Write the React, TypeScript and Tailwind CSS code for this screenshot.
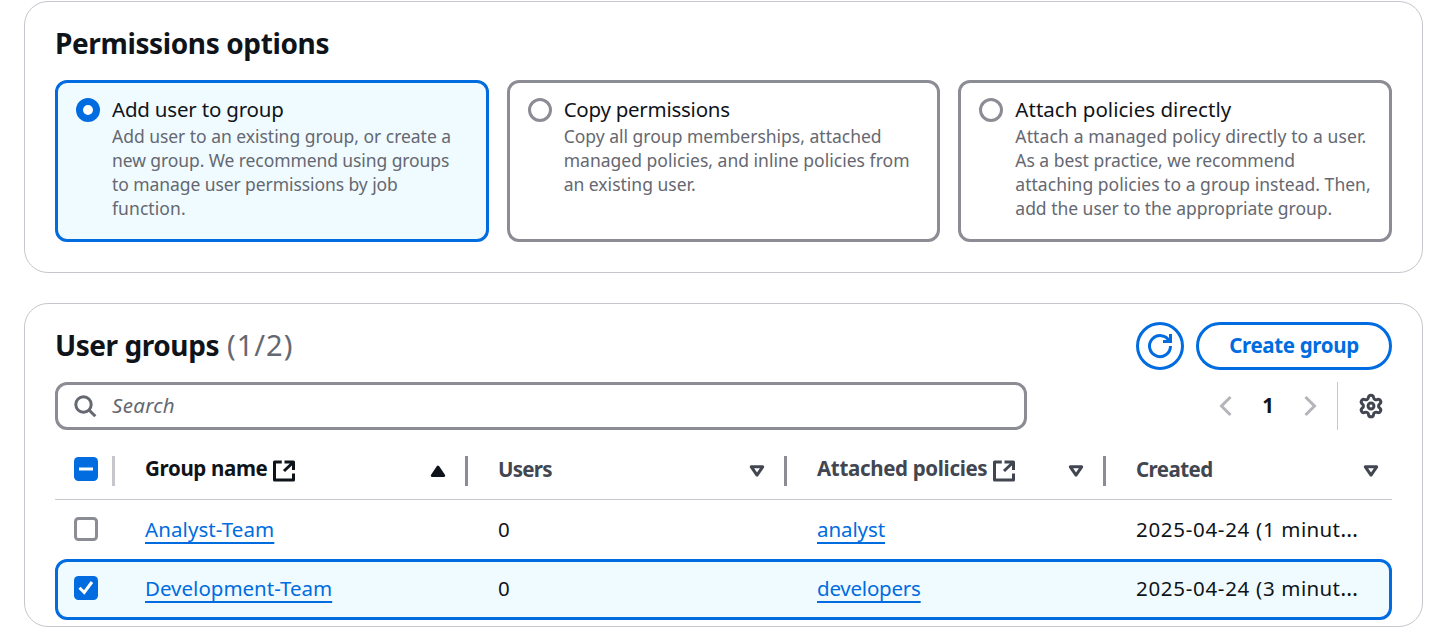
import type { ReactNode } from "react";

type Option = { title: string; titleClass: string; lines: [string, string][]; selected?: boolean };

const options: Option[] = [
  {
    title: "Add user to group",
    titleClass: "tracking-[-0.2px]",
    selected: true,
    lines: [
      ["Add user to an existing group, or create a", "tracking-[-0.03px]"],
      ["new group. We recommend using groups", "tracking-[-0.09px]"],
      ["to manage user permissions by job", "tracking-[-0.08px]"],
      ["function.", "tracking-[0.08px]"],
    ],
  },
  {
    title: "Copy permissions",
    titleClass: "tracking-[-0.26px]",
    lines: [
      ["Copy all group memberships, attached", "tracking-normal"],
      ["managed policies, and inline policies from", "tracking-[0.02px]"],
      ["an existing user.", "tracking-normal"],
    ],
  },
  {
    title: "Attach policies directly",
    titleClass: "tracking-[0.03px]",
    lines: [
      ["Attach a managed policy directly to a user.", "tracking-[0.13px]"],
      ["As a best practice, we recommend", "tracking-[-0.03px]"],
      ["attaching policies to a group instead. Then,", "tracking-[0.03px]"],
      ["add the user to the appropriate group.", "tracking-[-0.02px]"],
    ],
  },
];

function OptionCard({ option }: { option: Option }) {
  return (
    <label
      className={
        option.selected
          ? "flex h-[162px] gap-3 rounded-xl border-[3px] border-[#006ce0] bg-[#f0fbff] pl-[18px] pt-[11px]"
          : "flex h-[162px] gap-3 rounded-xl border-[3px] border-[#8c8c94] bg-white pl-[18px] pt-[11px]"
      }
    >
      <span
        className={
          option.selected
            ? "mt-1 size-6 shrink-0 rounded-full border-[7px] border-[#006ce0] bg-white"
            : "mt-1 size-6 shrink-0 rounded-full border-[3px] border-[#8c8c94] bg-white"
        }
      />
      <span className="flex flex-col whitespace-nowrap">
        <span className={`text-[20.5px] leading-[30px] ${option.titleClass}`}>{option.title}</span>
        {option.lines.map(([text, cls]) => (
          <span key={text} className={`text-[17.5px] leading-6 text-[#656871] ${cls}`}>
            {text}
          </span>
        ))}
      </span>
    </label>
  );
}

function ExternalIcon({ className }: { className: string }) {
  return (
    <svg className={className} width="24" height="24" viewBox="0 0 24 24" fill="none" stroke="currentColor" strokeWidth="3" strokeLinejoin="round">
      <path d="M9.8 3H2.5v18h19v-6.5" />
      <path d="M12.5 3h9v8M21 3.5l-9 8.5" />
    </svg>
  );
}

function SortIcon({ ascending = false }: { ascending?: boolean }) {
  return (
    <svg width="16" height="14" viewBox="0 0 16 14" fill={ascending ? "currentColor" : "none"} stroke="currentColor" strokeWidth="3" strokeLinejoin="round">
      <path d={ascending ? "M8 3.2l5.7 8.3H2.3z" : "M2.3 2.8h11.4L8 11.1z"} />
    </svg>
  );
}

function Checkbox({ state, className }: { state: "on" | "off" | "mixed"; className: string }) {
  if (state === "off") {
    return <span className={`size-6 rounded-[4.5px] border-[3px] border-[#8c8c94] bg-white ${className}`} />;
  }
  return (
    <span className={`size-6 rounded-[4.5px] bg-[#006ce0] ${className}`}>
      <svg width="24" height="24" viewBox="0 0 24 24" fill="none" stroke="white" strokeWidth="3">
        <path d={state === "on" ? "M5.5 11.8l4.7 4.7 7.8-10.5" : "M5 12h14"} />
      </svg>
    </span>
  );
}

function Link({ children, className = "" }: { children: ReactNode; className?: string }) {
  return (
    <a
      className={`text-[#006ce0] underline decoration-2 underline-offset-[5px] [text-decoration-skip-ink:none] ${className}`}
    >
      {children}
    </a>
  );
}

function Created({ text }: { text: [string, string] }) {
  return (
    <div className="pl-[30px]">
      <span className="tracking-[0.7px]">{text[0]} </span>
      <span className="tracking-[0.35px]">{text[1]}</span>
      <span className="text-[22.5px] leading-none">…</span>
    </div>
  );
}

const grid = "grid grid-cols-[60px_353px_319px_319px_286px]";

export default function App() {
  return (
    <main className="h-[633px] overflow-hidden bg-white pl-6 pt-px font-['Noto_Sans',sans-serif] text-[#0f141a]">
      <section className="h-[272px] w-[1399px] rounded-3xl border border-[#c6c6cd] px-[30px] pt-[23px]">
        <h2 className="h-[55px] text-[28px] font-bold leading-9 tracking-[-0.38px]">Permissions options</h2>
        <div className="grid grid-cols-3 gap-[18px]">
          {options.map((o) => (
            <OptionCard key={o.title} option={o} />
          ))}
        </div>
      </section>

      <section className="mt-[30px] h-[324px] w-[1399px] rounded-3xl border border-[#c6c6cd] px-[30px] pt-[18px]">
        <header className="flex h-12 items-center gap-3">
          <h2 className="mb-0.5 mr-auto flex items-baseline leading-9">
            <span className="text-[28px] font-bold tracking-[-0.44px]">User groups</span>
            <span className="ml-2 text-[29px] tracking-[1px] text-[#656871]">(1/2)</span>
          </h2>
          <button className="flex size-12 items-center justify-center rounded-full border-[3px] border-[#006ce0] text-[#006ce0]">
            <svg width="24" height="24" viewBox="0 0 16 16" fill="none" stroke="currentColor" strokeWidth="2" className="overflow-visible">
              <path d="M10 5h5V0" />
              <path d="M15 8A7 7 0 1 1 14.3 5" />
            </svg>
          </button>
          <button className="flex h-12 w-[196px] justify-center rounded-full border-[3px] border-[#006ce0] pt-[5px] text-[20.5px] font-bold leading-[30px] tracking-[-0.35px] text-[#006ce0]">
            Create group
          </button>
        </header>

        <div className="mt-3 flex h-12">
          <div className="flex w-[972px] rounded-xl border-[3px] border-[#8c8c94] pl-[15px] pt-[5px]">
            <svg className="mt-1 text-[#656871]" width="24" height="24" viewBox="0 0 24 24" fill="none" stroke="currentColor" strokeWidth="3">
              <circle cx="10.5" cy="10.5" r="7.7" />
              <path d="M16 16l6.3 6.3" />
            </svg>
            <span className="ml-[15px] text-[20.5px] italic leading-[30px] tracking-[0.31px] text-[#656871]">Search</span>
          </div>
          <div className="ml-auto flex items-center">
            <svg width="24" height="24" viewBox="0 0 24 24" fill="none" stroke="#b4b4bb" strokeWidth="3">
              <path d="M16.5 3l-9 9 9 9" />
            </svg>
            <span className="mb-0.5 w-[60px] text-center text-[20.5px] font-bold leading-[30px]">1</span>
            <svg width="24" height="24" viewBox="0 0 24 24" fill="none" stroke="#b4b4bb" strokeWidth="3">
              <path d="M7.5 3l9 9-9 9" />
            </svg>
            <span className="ml-[15px] h-12 w-px bg-[#c6c6cd]" />
            <svg className="ml-5 mr-2 text-[#424650]" width="26" height="26" viewBox="0 0 24 24" fill="none" stroke="currentColor" strokeWidth="2.8" strokeLinejoin="round">
              <path d="M9.671 4.136a2.34 2.34 0 0 1 4.659 0 2.34 2.34 0 0 0 3.319 1.915 2.34 2.34 0 0 1 2.33 4.033 2.34 2.34 0 0 0 0 3.831 2.34 2.34 0 0 1-2.33 4.033 2.34 2.34 0 0 0-3.319 1.915 2.34 2.34 0 0 1-4.659 0 2.34 2.34 0 0 0-3.32-1.915 2.34 2.34 0 0 1-2.33-4.033 2.34 2.34 0 0 0 0-3.831A2.34 2.34 0 0 1 6.35 6.051a2.34 2.34 0 0 0 3.319-1.915" />
              <circle cx="12" cy="12" r="2.7" />
            </svg>
          </div>
        </div>

        <div className="whitespace-nowrap text-[20.5px] leading-[30px]">
          <div className={`${grid} h-[70px] border-b border-[#c6c6cd] pt-[26px] font-bold text-[#424650]`}>
            <div className="flex h-[30px] justify-between border-r-[3px] border-[#c6c6cd] pl-[19px]">
              <Checkbox state="mixed" className="mt-px" />
            </div>
            <div className="flex h-[30px] items-center border-r-[3px] border-[#8c8c94] pl-[30px] pr-[19px] text-[#0f141a]">
              <span className="mb-1.5 w-[123px] tracking-[-0.34px]">Group name</span>
              <ExternalIcon className="ml-1" />
              <span className="ml-auto">
                <SortIcon ascending />
              </span>
            </div>
            <div className="flex h-[30px] items-center border-r-[3px] border-[#8c8c94] pl-[30px] pr-[19px]">
              <span className="mb-1 tracking-[-0.75px]">Users</span>
              <span className="ml-auto">
                <SortIcon />
              </span>
            </div>
            <div className="flex h-[30px] items-center border-r-[3px] border-[#8c8c94] pl-[30px] pr-[19px]">
              <span className="mb-1.5 w-[171px] tracking-[-0.33px]">Attached policies</span>
              <ExternalIcon className="ml-1" />
              <span className="ml-auto">
                <SortIcon />
              </span>
            </div>
            <div className="flex h-[30px] items-center pl-[30px] pr-[13px]">
              <span className="mb-1 tracking-[-0.55px]">Created</span>
              <span className="ml-auto">
                <SortIcon />
              </span>
            </div>
          </div>

          <div className={`${grid} h-[59px] pt-[14px]`}>
            <div className="flex pl-[19px]">
              <Checkbox state="off" className="mt-[3px]" />
            </div>
            <div className="pl-[30px]">
              <Link className="tracking-[0.09px]">Analyst-Team</Link>
            </div>
            <div className="pl-[30px]">0</div>
            <div className="pl-[30px]">
              <Link className="tracking-[-0.09px]">analyst</Link>
            </div>
            <Created text={["2025-04-24 (1", "minut"]} />
          </div>

          <div className="h-[61px] rounded-xl border-[3px] border-[#006ce0] bg-[#f0fbff] pt-[11px]">
            <div className={`${grid} -mx-[3px]`}>
              <div className="flex pl-[19px]">
                <Checkbox state="on" className="mt-[3px]" />
              </div>
              <div className="pl-[30px]">
                <Link>Development-Team</Link>
              </div>
              <div className="pl-[30px]">0</div>
              <div className="pl-[30px]">
                <Link className="tracking-[-0.22px]">developers</Link>
              </div>
              <Created text={["2025-04-24 (3", "minut"]} />
            </div>
          </div>
        </div>
      </section>
    </main>
  );
}
